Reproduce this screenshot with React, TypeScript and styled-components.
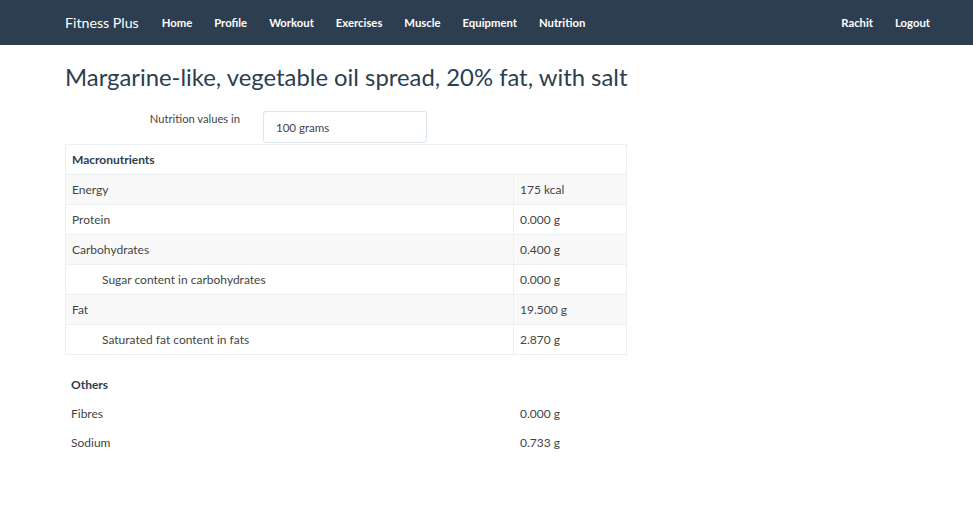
import React from 'react';
import styled, { createGlobalStyle } from 'styled-components';

const GlobalStyle = createGlobalStyle`
    body {
        margin: 0;
        background: #ffffff;
        font-family: Lato, "Open Sans", Arial, sans-serif;
        color: #2c3e50;
    }
`;

const NavBar = styled.nav`
    display: flex;
    align-items: center;
    justify-content: space-between;
    height: 45px;
    padding: 0 32px 0 65px;
    background-color: #2c3e50;
    color: #ffffff;
`;

const NavGroup = styled.div`
    display: flex;
    align-items: center;
`;

const Brand = styled.a`
    font-size: 14.2px;
    font-weight: 400;
    margin-right: 12px;
`;

const NavItem = styled.a`
    font-size: 11.3px;
    font-weight: 700;
    padding: 0 11px;
    color: #ffffff;
`;

const Page = styled.main`
    padding: 0 65px;
`;

const Title = styled.h1`
    margin: 17px 0 19px;
    font-size: 23.85px;
    font-weight: 400;
    line-height: 30px;
    color: #2c3e50;
`;

const FormRow = styled.div`
    display: flex;
    align-items: flex-start;
    width: 562px;
    margin-bottom: 1px;
`;

const Label = styled.label`
    width: 175px;
    text-align: right;
    padding-top: 1px;
    font-size: 11.2px;
    color: #444;
`;

const Input = styled.div`
    margin-left: 23px;
    width: 164px;
    height: 32px;
    box-sizing: border-box;
    padding: 0 12px;
    display: flex;
    align-items: center;
    border: 1px solid #dce4ec;
    border-radius: 3px;
    font-size: 11.5px;
    color: #444;
`;

const Table = styled.table`
    width: 562px;
    border-collapse: collapse;
    font-size: 12px;
    color: #444;
    border: 1px solid #ecf0f1;
`;

const Row = styled.tr<{ $striped?: boolean }>`
    background: ${p => (p.$striped ? '#f9f9f9' : '#ffffff')};
`;

const Cell = styled.td<{ $indent?: boolean; $bold?: boolean; $value?: boolean }>`
    height: 29px;
    padding: 0 6px 0 ${p => (p.$indent ? '36px' : '6px')};
    border-top: 1px solid #ecf0f1;
    border-left: ${p => (p.$value ? '1px solid #ecf0f1' : 'none')};
    width: ${p => (p.$value ? '100px' : 'auto')};
    font-weight: ${p => (p.$bold ? 700 : 400)};
    color: ${p => (p.$bold ? '#2c3e50' : '#444')};
`;

const Others = styled.div`
    width: 562px;
    margin-top: 15px;
    font-size: 12px;
    color: #444;
`;

const OtherRow = styled.div<{ $bold?: boolean }>`
    display: grid;
    grid-template-columns: 449px 1fr;
    height: 29px;
    align-items: center;
    padding-left: 6px;
    font-weight: ${p => (p.$bold ? 700 : 400)};
    color: ${p => (p.$bold ? '#2c3e50' : '#444')};
`;

const macros = [
    { name: 'Energy', value: '175 kcal' },
    { name: 'Protein', value: '0.000 g' },
    { name: 'Carbohydrates', value: '0.400 g' },
    { name: 'Sugar content in carbohydrates', value: '0.000 g', indent: true },
    { name: 'Fat', value: '19.500 g' },
    { name: 'Saturated fat content in fats', value: '2.870 g', indent: true },
];

const others = [
    { name: 'Fibres', value: '0.000 g' },
    { name: 'Sodium', value: '0.733 g' },
];

const App: React.FC = () => {
    return (
        <>
            <GlobalStyle />
            <NavBar>
                <NavGroup>
                    <Brand>Fitness Plus</Brand>
                    {['Home', 'Profile', 'Workout', 'Exercises', 'Muscle', 'Equipment', 'Nutrition'].map(item => (
                        <NavItem key={item}>{item}</NavItem>
                    ))}
                </NavGroup>
                <NavGroup>
                    <NavItem>Rachit</NavItem>
                    <NavItem>Logout</NavItem>
                </NavGroup>
            </NavBar>
            <Page>
                <Title>Margarine-like, vegetable oil spread, 20% fat, with salt</Title>
                <FormRow>
                    <Label>Nutrition values in</Label>
                    <Input>100 grams</Input>
                </FormRow>
                <Table>
                    <tbody>
                        <Row>
                            <Cell $bold colSpan={2}>Macronutrients</Cell>
                        </Row>
                        {macros.map((m, i) => (
                            <Row key={m.name} $striped={i % 2 === 0}>
                                <Cell $indent={m.indent}>{m.name}</Cell>
                                <Cell $value>{m.value}</Cell>
                            </Row>
                        ))}
                    </tbody>
                </Table>
                <Others>
                    <OtherRow $bold>Others</OtherRow>
                    {others.map(o => (
                        <OtherRow key={o.name}>
                            <span>{o.name}</span>
                            <span>{o.value}</span>
                        </OtherRow>
                    ))}
                </Others>
            </Page>
        </>
    );
};

export default App;
